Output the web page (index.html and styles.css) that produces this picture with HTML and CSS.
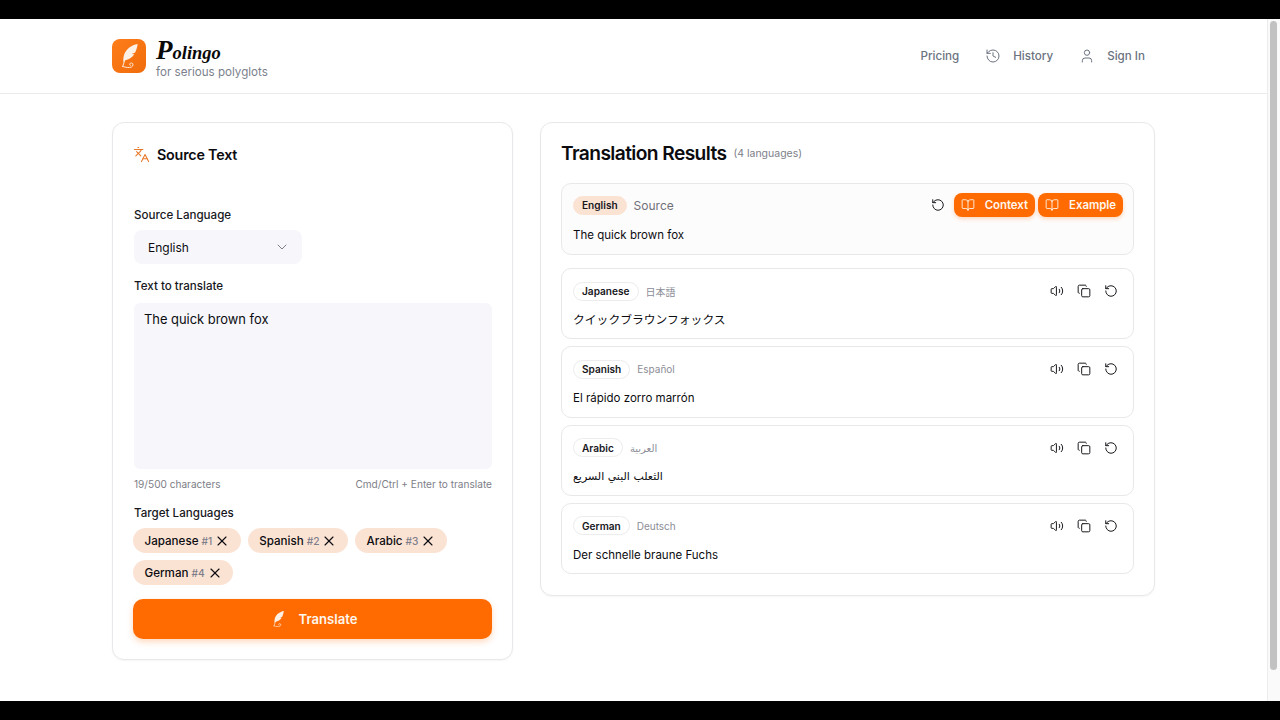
FILE: index.html
```html
<!DOCTYPE html>
<html lang="en">
<head>
    <meta charset="UTF-8">
    <meta name="viewport" content="width=device-width, initial-scale=1.0">
    <title>Polingo</title>
    <link rel="stylesheet" href="styles.css">
</head>
<body>
    <svg class="sprite" xmlns="http://www.w3.org/2000/svg">
        <symbol id="i-languages" viewBox="0 0 24 24"><path d="m5 8 6 6"/><path d="m4 14 6-6 2-3"/><path d="M2 5h12"/><path d="M7 2h1"/><path d="m22 22-5-10-5 10"/><path d="M14 18h6"/></symbol>
        <symbol id="i-history" viewBox="0 0 24 24"><path d="M3 12a9 9 0 1 0 9-9 9.75 9.75 0 0 0-6.74 2.74L3 8"/><path d="M3 3v5h5"/><path d="M12 7v5l4 2"/></symbol>
        <symbol id="i-user" viewBox="0 0 24 24"><path d="M19 21v-2a4 4 0 0 0-4-4H9a4 4 0 0 0-4 4v2"/><circle cx="12" cy="7" r="4"/></symbol>
        <symbol id="i-chevron" viewBox="0 0 24 24"><path d="m6 9 6 6 6-6"/></symbol>
        <symbol id="i-x" viewBox="0 0 24 24"><path d="M18 6 6 18"/><path d="m6 6 12 12"/></symbol>
        <symbol id="i-book" viewBox="0 0 24 24"><path d="M12 7v14"/><path d="M3 18a1 1 0 0 1-1-1V4a1 1 0 0 1 1-1h5a4 4 0 0 1 4 4 4 4 0 0 1 4-4h5a1 1 0 0 1 1 1v13a1 1 0 0 1-1 1h-6a3 3 0 0 0-3 3 3 3 0 0 0-3-3z"/></symbol>
        <symbol id="i-rotate" viewBox="0 0 24 24"><path d="M3 12a9 9 0 1 0 9-9 9.75 9.75 0 0 0-6.74 2.74L3 8"/><path d="M3 3v5h5"/></symbol>
        <symbol id="i-volume" viewBox="0 0 24 24"><path d="M11 4.702a.705.705 0 0 0-1.203-.498L6.413 7.587A1.4 1.4 0 0 1 5.416 8H3a1 1 0 0 0-1 1v6a1 1 0 0 0 1 1h2.416a1.4 1.4 0 0 1 .997.413l3.383 3.384A.705.705 0 0 0 11 19.298z"/><path d="M16 9a5 5 0 0 1 0 6"/><path d="M19.364 18.364a9 9 0 0 0 0-12.728"/></symbol>
        <symbol id="i-copy" viewBox="0 0 24 24"><rect x="8" y="8" width="14" height="14" rx="2"/><path d="M4 16c-1.1 0-2-.9-2-2V4c0-1.1.9-2 2-2h10c1.1 0 2 .9 2 2"/></symbol>
        <symbol id="i-quill" viewBox="0 0 16 23"><path class="quill-fill" d="M15.800 0C10 1 4 5 2.500 11.500c-.5 2.200-.6 4-.3 6 .5-.8 1-1.400 1.600-1.900 3.500-.6 6.800-2.600 8.800-5.800l-2.400-.1 3.200-1.500C14.700 5.500 15.500 2.800 15.800 0z"/><path class="quill-line" d="M3.800 14.500 1.500 21.500"/><path class="quill-line" d="M1.500 21.500c2.500 1 6.500 1.500 8.500.5 1.800-.9 1.800-3.500 0-3.800-1.600-.3-2.500 1.500-1.300 2.400"/></symbol>
    </svg>

    <div class="letterbox"></div>

    <div class="viewport">
        <div class="page">
            <header class="topbar">
                <a class="brand">
                    <span class="brand-logo"><svg class="quill-big"><use href="#i-quill"/></svg></span>
                    <span class="brand-text">
                        <span class="brand-name">Polingo</span>
                        <span class="brand-tag">for serious polyglots</span>
                    </span>
                </a>
                <nav class="nav">
                    <a class="nav-link">Pricing</a>
                    <a class="nav-link"><svg class="icon icon-nav"><use href="#i-history"/></svg>History</a>
                    <a class="nav-link"><svg class="icon icon-nav"><use href="#i-user"/></svg>Sign In</a>
                </nav>
            </header>

            <main class="content">
                <section class="card source-card">
                    <h2 class="source-title"><svg class="icon icon-title"><use href="#i-languages"/></svg>Source Text</h2>

                    <label class="field-label label-source">Source Language</label>
                    <div class="select">English<svg class="icon icon-chevron"><use href="#i-chevron"/></svg></div>

                    <label class="field-label label-text">Text to translate</label>
                    <div class="textarea">The quick brown fox</div>
                    <div class="hint-row">
                        <span>19/500 characters</span>
                        <span>Cmd/Ctrl + Enter to translate</span>
                    </div>

                    <label class="field-label label-target">Target Languages</label>
                    <div class="chips">
                        <span class="chip">Japanese<em>#1</em><svg class="icon icon-x"><use href="#i-x"/></svg></span>
                        <span class="chip">Spanish<em>#2</em><svg class="icon icon-x"><use href="#i-x"/></svg></span>
                        <span class="chip">Arabic<em>#3</em><svg class="icon icon-x"><use href="#i-x"/></svg></span>
                        <span class="chip">German<em>#4</em><svg class="icon icon-x"><use href="#i-x"/></svg></span>
                    </div>

                    <button class="translate-btn"><svg class="quill-small"><use href="#i-quill"/></svg>Translate</button>
                </section>

                <section class="card results-card">
                    <div class="results-head">
                        <h2 class="results-title">Translation Results</h2>
                        <span class="results-count">(4 languages)</span>
                    </div>

                    <article class="result result-source">
                        <div class="result-top">
                            <span class="lang-pill lang-pill-source">English</span>
                            <span class="native native-source">Source</span>
                            <div class="actions-source">
                                <svg class="icon icon-action rotate-source"><use href="#i-rotate"/></svg>
                                <button class="orange-btn"><svg class="icon icon-book"><use href="#i-book"/></svg>Context</button>
                                <button class="orange-btn"><svg class="icon icon-book"><use href="#i-book"/></svg>Example</button>
                            </div>
                        </div>
                        <p class="result-text">The quick brown fox</p>
                    </article>

                    <article class="result">
                        <div class="result-top">
                            <span class="lang-pill">Japanese</span>
                            <span class="native" lang="ja">日本語</span>
                            <div class="actions">
                                <svg class="icon icon-action"><use href="#i-volume"/></svg>
                                <svg class="icon icon-action"><use href="#i-copy"/></svg>
                                <svg class="icon icon-action"><use href="#i-rotate"/></svg>
                            </div>
                        </div>
                        <p class="result-text" lang="ja">クイックブラウンフォックス</p>
                    </article>

                    <article class="result">
                        <div class="result-top">
                            <span class="lang-pill">Spanish</span>
                            <span class="native">Español</span>
                            <div class="actions">
                                <svg class="icon icon-action"><use href="#i-volume"/></svg>
                                <svg class="icon icon-action"><use href="#i-copy"/></svg>
                                <svg class="icon icon-action"><use href="#i-rotate"/></svg>
                            </div>
                        </div>
                        <p class="result-text">El rápido zorro marrón</p>
                    </article>

                    <article class="result">
                        <div class="result-top">
                            <span class="lang-pill">Arabic</span>
                            <span class="native" lang="ar">العربية</span>
                            <div class="actions">
                                <svg class="icon icon-action"><use href="#i-volume"/></svg>
                                <svg class="icon icon-action"><use href="#i-copy"/></svg>
                                <svg class="icon icon-action"><use href="#i-rotate"/></svg>
                            </div>
                        </div>
                        <p class="result-text" lang="ar">الثعلب البني السريع</p>
                    </article>

                    <article class="result">
                        <div class="result-top">
                            <span class="lang-pill">German</span>
                            <span class="native">Deutsch</span>
                            <div class="actions">
                                <svg class="icon icon-action"><use href="#i-volume"/></svg>
                                <svg class="icon icon-action"><use href="#i-copy"/></svg>
                                <svg class="icon icon-action"><use href="#i-rotate"/></svg>
                            </div>
                        </div>
                        <p class="result-text">Der schnelle braune Fuchs</p>
                    </article>
                </section>
            </main>
        </div>
        <div class="scrollbar"><div class="scroll-thumb"></div></div>
    </div>

    <div class="letterbox letterbox-bottom"></div>
</body>
</html>
```

FILE: styles.css
```css
* {
    box-sizing: border-box;
}

html, body {
    margin: 0;
    height: 720px;
    overflow: hidden;
}

body {
    font-family: Inter, "Noto Sans CJK JP", "DejaVu Sans", sans-serif;
    color: #0c0c10;
    background: #000;
    display: flex;
    flex-direction: column;
}

.sprite {
    display: none;
}

.letterbox {
    height: 19px;
    background: #000;
    flex: none;
}

.viewport {
    height: 682px;
    display: flex;
    background: #fff;
    overflow: hidden;
}

.page {
    flex: 1;
    min-width: 0;
}

.scrollbar {
    width: 13px;
    padding: 2px 3px 0 2px;
    border-left: 1px solid #ececec;
    background: #fafafa;
}

.scroll-thumb {
    height: 649px;
    border-radius: 4px;
    background: #c2c2c2;
}

.icon {
    fill: none;
    stroke: currentColor;
    stroke-width: 2;
    stroke-linecap: round;
    stroke-linejoin: round;
    flex: none;
}

/* top bar */
.topbar {
    height: 75px;
    padding: 0 122px 0 112px;
    display: flex;
    align-items: center;
    justify-content: space-between;
    border-bottom: 1px solid #ebebee;
}

.brand {
    display: flex;
    align-items: center;
    gap: 10px;
}

.brand-logo {
    width: 34px;
    height: 34px;
    border-radius: 8px;
    background: linear-gradient(135deg, #ff7d1a, #f06c0c);
    display: flex;
    align-items: center;
    justify-content: center;
}

.quill-big {
    width: 17px;
    height: 24px;
}

.quill-fill {
    fill: #fdf0e4;
    stroke: none;
}

.quill-line {
    fill: none;
    stroke: #fdf0e4;
    stroke-width: 0.9;
    stroke-linecap: round;
}

.brand-text {
    display: flex;
    flex-direction: column;
    padding-top: 6px;
}

.brand-name {
    display: block;
    font-family: "Liberation Serif", serif;
    font-style: italic;
    font-weight: 700;
    font-size: 18.500px;
    line-height: 22px;
    color: #0a0a0a;
}

.brand-name::first-letter {
    font-size: 27px;
}

.brand-tag {
    font-size: 11.600px;
    line-height: 16px;
    color: #7b818c;
}

.nav {
    display: flex;
    align-items: center;
    gap: 26px;
}

.nav-link {
    display: flex;
    align-items: center;
    gap: 12px;
    font-size: 11.600px;
    font-weight: 500;
    color: #6b7280;
}

.icon-nav {
    width: 16px;
    height: 16px;
    stroke-width: 1.500;
}

/* main columns */
.content {
    display: grid;
    grid-template-columns: 401px 615px;
    gap: 27px;
    align-items: start;
    padding: 28px 0 0 112px;
}

.card {
    border: 1px solid #e8e8eb;
    border-radius: 12px;
    background: #fff;
    box-shadow: 0 1px 2px rgba(0, 0, 0, 0.04);
}

.source-card {
    height: 538px;
    padding: 20px 20px 0 21px;
}

.source-title {
    display: flex;
    align-items: center;
    gap: 7px;
    margin: 0;
    height: 22px;
    font-size: 14.300px;
    font-weight: 600;
    letter-spacing: -0.2px;
}

.icon-title {
    width: 17px;
    height: 17px;
    margin-left: -1px;
    stroke-width: 1.500;
    color: #e8782a;
}

.field-label {
    display: block;
    font-size: 11.600px;
    font-weight: 500;
    line-height: 16px;
    color: #17171c;
}

.label-source {
    margin-top: 42px;
}

.label-text {
    margin-top: 14px;
}

.label-target {
    margin-top: 14px;
}

.select {
    width: 168px;
    height: 34px;
    margin-top: 7px;
    padding: 0 12px 0 14px;
    border-radius: 8px;
    background: #f7f7fb;
    display: flex;
    align-items: center;
    justify-content: space-between;
    font-size: 12px;
}

.icon-chevron {
    width: 16px;
    height: 16px;
    stroke-width: 1.500;
    color: #7d8088;
}

.textarea {
    height: 166px;
    margin-top: 9px;
    padding: 8px 10px;
    border-radius: 6px;
    background: #f7f7fb;
    font-size: 12.900px;
    line-height: 18px;
}

.hint-row {
    display: flex;
    justify-content: space-between;
    margin-top: 8px;
    font-size: 10.100px;
    line-height: 14px;
    color: #7d8088;
}

.chips {
    display: flex;
    flex-wrap: wrap;
    gap: 7px;
    margin: 7px 0 0 -1px;
}

.chip {
    height: 25px;
    padding: 0 10.500px 0 11.500px;
    border-radius: 13px;
    background: #fbe3d4;
    display: flex;
    align-items: center;
    gap: 3px;
    font-size: 11.600px;
    font-weight: 500;
}

.chip em {
    font-style: normal;
    font-size: 10.200px;
    color: #7d7d8a;
}

.icon-x {
    width: 16px;
    height: 16px;
    margin-left: -1px;
    stroke-width: 1.700;
}

.translate-btn {
    width: 359px;
    height: 40px;
    margin: 14px 0 0 -1px;
    padding-left: 11px;
    border: 0;
    border-radius: 10px;
    background: #ff6b00;
    color: #fff6ee;
    font: 600 13.100px Inter, sans-serif;
    display: flex;
    align-items: center;
    justify-content: center;
    gap: 15px;
    box-shadow: 0 3px 6px rgba(255, 107, 0, 0.25);
}

.quill-small {
    width: 11px;
    height: 16px;
}

/* results */
.results-card {
    height: 474px;
    padding: 19px 20px 0 20px;
}

.results-head {
    display: flex;
    align-items: center;
    gap: 7px;
    height: 23px;
}

.results-title {
    margin: 0;
    font-size: 19.200px;
    font-weight: 600;
    line-height: 23px;
    letter-spacing: -0.6px;
}

.results-count {
    font-size: 10.500px;
    color: #7d8088;
}

.result {
    height: 71.300px;
    margin-top: 7px;
    padding: 12px 10px 0 11px;
    border: 1px solid #e8e8eb;
    border-radius: 10px;
    background: #fff;
}

.result-source {
    height: 72px;
    margin-top: 18px;
    margin-bottom: 13px;
    padding-top: 11px;
    background: #fdfcfc;
}

.result-source .result-text {
    margin-top: 11px;
}

.result-top {
    display: flex;
    align-items: center;
    height: 20px;
    gap: 7px;
}

.lang-pill {
    height: 19px;
    padding: 0 8px;
    border: 1px solid #ececef;
    border-radius: 10px;
    display: flex;
    align-items: center;
    font-size: 10.100px;
    font-weight: 600;
    color: #17171c;
}

.lang-pill-source {
    border-color: #fbe3d4;
    background: #fbe3d4;
}

.native {
    font-size: 10px;
    color: #8b8d96;
}

.native-source {
    font-size: 12px;
    color: #6f7079;
}

.actions {
    margin-left: auto;
    display: flex;
    align-items: center;
    gap: 13px;
    padding-right: 5px;
}

.actions-source {
    margin-left: auto;
    display: flex;
    align-items: center;
    gap: 3px;
}

.rotate-source {
    margin-right: 6px;
}

.icon-action {
    width: 14px;
    height: 14px;
    stroke-width: 1.700;
    color: #17171c;
}

.orange-btn {
    height: 24px;
    padding: 0 7px;
    border: 0;
    border-radius: 8px;
    background: #ff6b00;
    color: #fff6ee;
    font: 600 11.400px Inter, sans-serif;
    display: flex;
    align-items: center;
    gap: 10px;
    box-shadow: 0 2px 4px rgba(255, 107, 0, 0.25);
}

.icon-book {
    width: 14px;
    height: 14px;
    stroke-width: 1.500;
}

.result-text {
    margin: 10px 0 0;
    font-size: 11.500px;
    line-height: 18px;
}

.result-text[lang="ja"] {
    font-size: 11.800px;
}

.result-text[lang="ar"] {
    font-family: "DejaVu Sans", sans-serif;
    font-size: 11px;
}
```
